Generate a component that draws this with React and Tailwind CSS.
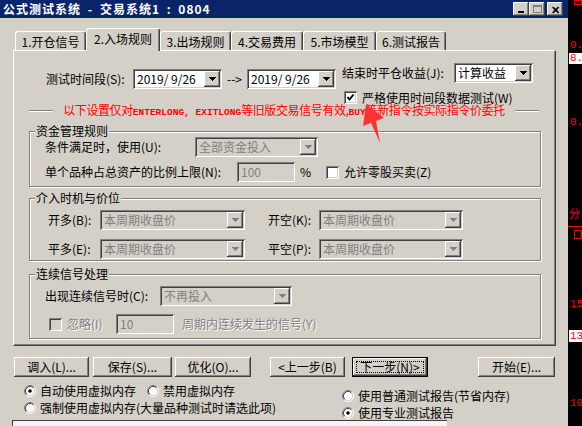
import React from 'react';

const raised = 'shadow-[inset_-1px_-1px_#404040,inset_1px_1px_#ffffff,inset_-2px_-2px_#808080,inset_2px_2px_#d4d0c8]';
const sunken = 'shadow-[inset_1px_1px_#808080,inset_-1px_-1px_#ffffff,inset_2px_2px_#404040,inset_-2px_-2px_#d4d0c8]';
const etched = 'border border-[#808080] shadow-[1px_1px_0_#ffffff,inset_1px_1px_0_#ffffff]';
const dim = 'text-[#808080] [text-shadow:1px_1px_0_#ffffff]';

const Tri = ({ disabled }) => (
  <svg width="7" height="4" viewBox="0 0 7 4" shapeRendering="crispEdges">
    <path d="M0 0h7v1h-1v1h-1v1h-1v1h-1v-1h-1v-1h-1v-1h-1z" fill={disabled ? '#808080' : '#000'} />
  </svg>
);

const Combo = ({ value, w, disabled }) => (
  <div className={`${sunken} ${disabled ? 'bg-[#d4d0c8] text-[#808080]' : 'bg-white text-black'} ${w} h-[20px] flex items-center p-[2px] shrink-0`}>
    <span className="flex-1 pl-[2px] whitespace-pre leading-[14px]">{value}</span>
    <span className={`${raised} bg-[#d4d0c8] w-[16px] h-[16px] flex items-center justify-center shrink-0`}>
      <Tri disabled={disabled} />
    </span>
  </div>
);

const Check = ({ checked, disabled }) => (
  <span className={`${sunken} ${disabled ? 'bg-[#d4d0c8]' : 'bg-white'} w-[13px] h-[13px] shrink-0 flex items-center justify-center`}>
    {checked && (
      <svg width="9" height="9" viewBox="0 0 9 9">
        <polyline points="1.5,4 3.5,6.5 7.5,1.5" fill="none" stroke="#000" strokeWidth="2" />
      </svg>
    )}
  </span>
);

const Radio = ({ checked }) => (
  <svg width="12" height="12" viewBox="0 0 12 12" className="shrink-0">
    <circle cx="6" cy="6" r="4.5" fill="#fff" />
    <path d="M2.11 9.89A5.5 5.5 0 0 1 9.89 2.11" fill="none" stroke="#808080" />
    <path d="M9.89 2.11A5.5 5.5 0 0 1 2.11 9.89" fill="none" stroke="#fff" />
    <path d="M2.82 9.18A4.5 4.5 0 0 1 9.18 2.82" fill="none" stroke="#404040" />
    <path d="M9.18 2.82A4.5 4.5 0 0 1 2.82 9.18" fill="none" stroke="#d4d0c8" />
    {checked && <circle cx="6" cy="6" r="1.8" fill="#000" />}
  </svg>
);

const Btn = ({ label, w, def }) =>
  def ? (
    <div className={`${w} h-[20px] border border-black shrink-0`}>
      <div className={`${raised} bg-[#d4d0c8] w-full h-full p-[3px]`}>
        <div className="w-full h-full border border-dotted border-black flex items-center justify-center">{label}</div>
      </div>
    </div>
  ) : (
    <div className={`${raised} ${w} h-[20px] bg-[#d4d0c8] flex items-center justify-center shrink-0`}>{label}</div>
  );

const Tab = ({ label, w, active }) => (
  <div
    className={`${w} ${active ? 'h-[23px] -mb-[1px] z-10 bg-[#d4d0c8] pt-[3px]' : 'h-[19px] pt-[3px]'} relative border-t border-l border-white border-r border-r-[#404040] shadow-[inset_-1px_0_#808080] rounded-t-[3px] flex justify-center shrink-0`}
  >
    {label}
  </div>
);

const Group = ({ title, className, children }) => (
  <div className={`${etched} ${className} relative ml-[15px] w-[512px] shrink-0`}>
    <span className="absolute -top-[8px] left-[5px] bg-[#d4d0c8] px-[1px] leading-[14px]">{title}</span>
    {children}
  </div>
);

export default function App() {
  return (
    <div className="relative w-[582px] h-[426px] flex overflow-hidden text-[12px] leading-[14px] text-black [font-family:'Noto_Sans_CJK_SC','Noto_Sans',sans-serif]">
      <div className="w-[568px] h-full bg-[#d4d0c8] flex flex-col">
        <div className="h-[18px] bg-[#0a246a] flex items-center pl-[3px] pr-[3px] shrink-0">
          <span className="flex-1 text-white font-bold whitespace-pre tracking-[1px] [word-spacing:3px]">公式测试系统 - 交易系统1 : 0804</span>
          <span className={`${raised} bg-[#d4d0c8] w-[16px] h-[14px] flex items-end justify-center pb-[3px]`}>
            <span className="w-[6px] h-[2px] bg-black" />
          </span>
          <span className={`${raised} bg-[#d4d0c8] w-[16px] h-[14px] flex items-center justify-center`}>
            <span className="w-[9px] h-[8px] border border-[#808080] border-t-2" />
          </span>
          <span className={`${raised} bg-[#d4d0c8] w-[16px] h-[14px] ml-[2px] mr-[2px] flex items-center justify-center text-[11px] font-bold leading-none`}>✕</span>
        </div>

        <div className="mt-[10px] ml-[15px] h-[22px] flex items-end shrink-0">
          <Tab label="1.开仓信号" w="w-[71px]" />
          <Tab label="2.入场规则" w="w-[74px]" active />
          <Tab label="3.出场规则" w="w-[71px]" />
          <Tab label="4.交易费用" w="w-[72px]" />
          <Tab label="5.市场模型" w="w-[73px]" />
          <Tab label="6.测试报告" w="w-[70px]" />
        </div>

        <div className="ml-[13px] w-[543px] h-[296px] shrink-0 border-l border-t border-white border-r border-b border-r-[#404040] border-b-[#404040] shadow-[inset_-1px_-1px_#808080] flex flex-col">
          <div className="mt-[12px] h-[42px] pl-[32px] flex items-start shrink-0">
            <div className="mt-[6px] flex items-center">
              <span className="w-[87px]">测试时间段(S):</span>
              <Combo value="2019/ 9/26" w="w-[89px]" />
              <span className="w-[25px] text-center">--&gt;</span>
              <Combo value="2019/ 9/26" w="w-[89px]" />
            </div>
            <div className="ml-[6px] flex flex-col">
              <div className="flex items-center">
                <span className="w-[112px]">结束时平仓收益(J):</span>
                <Combo value="计算收益" w="w-[79px]" />
              </div>
              <div className="mt-[8px] ml-[2px] h-[13px] flex items-center gap-[5px]">
                <Check checked />
                <span className="leading-[13px]">严格使用时间段数据测试(W)</span>
              </div>
            </div>
          </div>

          <div className="h-[12px] ml-[15px] w-[510px] flex items-center gap-[3px] text-[#ff0000] shrink-0">
            <span className="w-[24px] h-[2px] shrink-0 border-t border-[#808080] border-b border-b-white" />
            <span className="flex-1 whitespace-nowrap text-center leading-[12px] tracking-[-0.4px]">
              以下设置仅对<span className="[font-family:'Liberation_Mono',monospace] font-bold text-[9.5px] tracking-normal">ENTERLONG, EXITLONG</span>等旧版交易信号有效,<span className="[font-family:'Liberation_Mono',monospace] font-bold text-[9.5px] tracking-normal">BUY</span>等新指令按实际指令价委托
            </span>
            <span className="w-[24px] h-[2px] shrink-0 border-t border-[#808080] border-b border-b-white" />
          </div>

          <Group title="资金管理规则" className="mt-[14px] h-[56px] pt-[5px] pl-[15px]">
            <div className="flex items-center">
              <span className="w-[150px]">条件满足时，使用(U):</span>
              <Combo value="全部资金投入" w="w-[123px]" disabled />
            </div>
            <div className="mt-[5px] flex items-center">
              <span className="w-[192px]">单个品种占总资产的比例上限(N):</span>
              <div className={`${sunken} w-[58px] h-[20px] bg-[#d4d0c8] text-[#808080] flex items-center pl-[4px]`}>100</div>
              <span className="ml-[5px] w-[26px]">%</span>
              <Check />
              <span className="ml-[5px]">允许零股买卖(Z)</span>
            </div>
          </Group>

          <Group title="介入时机与价位" className="mt-[11px] h-[63px] pt-[11px] pl-[18px]">
            <div className="flex items-center">
              <span className="w-[52px]">开多(B):</span>
              <Combo value="本周期收盘价" w="w-[145px]" disabled />
              <span className="ml-[23px] w-[51px]">开空(K):</span>
              <Combo value="本周期收盘价" w="w-[144px]" disabled />
            </div>
            <div className="mt-[9px] flex items-center">
              <span className="w-[52px]">平多(E):</span>
              <Combo value="本周期收盘价" w="w-[145px]" disabled />
              <span className="ml-[23px] w-[51px]">平空(P):</span>
              <Combo value="本周期收盘价" w="w-[144px]" disabled />
            </div>
          </Group>

          <Group title="连续信号处理" className="mt-[13px] h-[65px] pt-[11px] pl-[15px]">
            <div className="flex items-center">
              <span className="w-[115px]">出现连续信号时(C):</span>
              <Combo value="不再投入" w="w-[132px]" disabled />
            </div>
            <div className="mt-[8px] ml-[4px] flex items-center">
              <Check disabled />
              <span className={`ml-[5px] w-[49px] ${dim}`}>忽略(I)</span>
              <div className={`${sunken} w-[58px] h-[20px] bg-[#d4d0c8] text-[#808080] flex items-center pl-[4px]`}>10</div>
              <span className={`ml-[8px] ${dim}`}>周期内连续发生的信号(Y)</span>
            </div>
          </Group>
        </div>

        <div className="mt-[11px] ml-[14px] flex items-center shrink-0">
          <Btn label="调入(L)..." w="w-[75px]" />
          <span className="w-[4px]" />
          <Btn label="保存(S)..." w="w-[79px]" />
          <span className="w-[3px]" />
          <Btn label="优化(O)..." w="w-[76px]" />
          <span className="w-[19px]" />
          <Btn label="<上一步(B)" w="w-[75px]" />
          <span className="w-[7px]" />
          <Btn label="下一步(N)>" w="w-[76px]" def />
          <span className="w-[50px]" />
          <Btn label="开始(E)..." w="w-[77px]" />
        </div>

        <div className="mt-[8px] flex shrink-0">
          <div className="ml-[24px] w-[318px] flex flex-col gap-[5px]">
            <div className="h-[12px] flex items-center">
              <Radio checked />
              <span className="ml-[4px] w-[107px]">自动使用虚拟内存</span>
              <Radio />
              <span className="ml-[4px]">禁用虚拟内存</span>
            </div>
            <div className="h-[12px] flex items-center">
              <Radio />
              <span className="ml-[4px]">强制使用虚拟内存(大量品种测试时请选此项)</span>
            </div>
          </div>
          <div className="mt-[5px] flex flex-col gap-[5px]">
            <div className="h-[12px] flex items-center">
              <Radio />
              <span className="ml-[4px]">使用普通测试报告(节省内存)</span>
            </div>
            <div className="h-[12px] flex items-center">
              <Radio checked />
              <span className="ml-[4px]">使用专业测试报告</span>
            </div>
          </div>
        </div>

        <div className="mt-auto ml-[12px] w-[435px] h-[6px] border-t border-l border-[#404040] bg-[#f4f4f4]" />
      </div>

      <div className="relative w-[14px] h-full bg-black text-[#ff0000] text-[11px] leading-[11px] [font-family:'Liberation_Mono',monospace]">
        <span className="absolute top-0 left-[6px] w-[8px] h-[5px] border border-[#ff0000]" />
        <span className="absolute top-[40px] left-[2px]">0.</span>
        <span className="absolute top-[53px] left-[1px] w-[13px] h-[11px] bg-white pl-[1px]">8.</span>
        <span className="absolute top-[117px] left-[2px]">0.</span>
        <span className="absolute top-[208px] left-[1px] [font-family:'Noto_Sans_CJK_SC',sans-serif]">分</span>
        <span className="absolute top-[226px] left-0 w-full h-px bg-[#ff0000]" />
        <span className="absolute top-[230px] left-[6px] w-[8px] h-[9px] border border-[#ff0000]" />
        <span className="absolute top-[299px] left-[2px]">15</span>
        <span className="absolute top-[330px] left-[1px] w-[13px] h-[12px] bg-white pl-[1px] pt-[1px]">13</span>
        <span className="absolute top-[398px] left-[2px]">10</span>
      </div>

      <svg className="absolute left-0 top-0 pointer-events-none" width="582" height="426">
        <polygon points="366,104 384,118 376,121 380,143 371,123 363,126" fill="#ff3333" />
      </svg>
    </div>
  );
}
